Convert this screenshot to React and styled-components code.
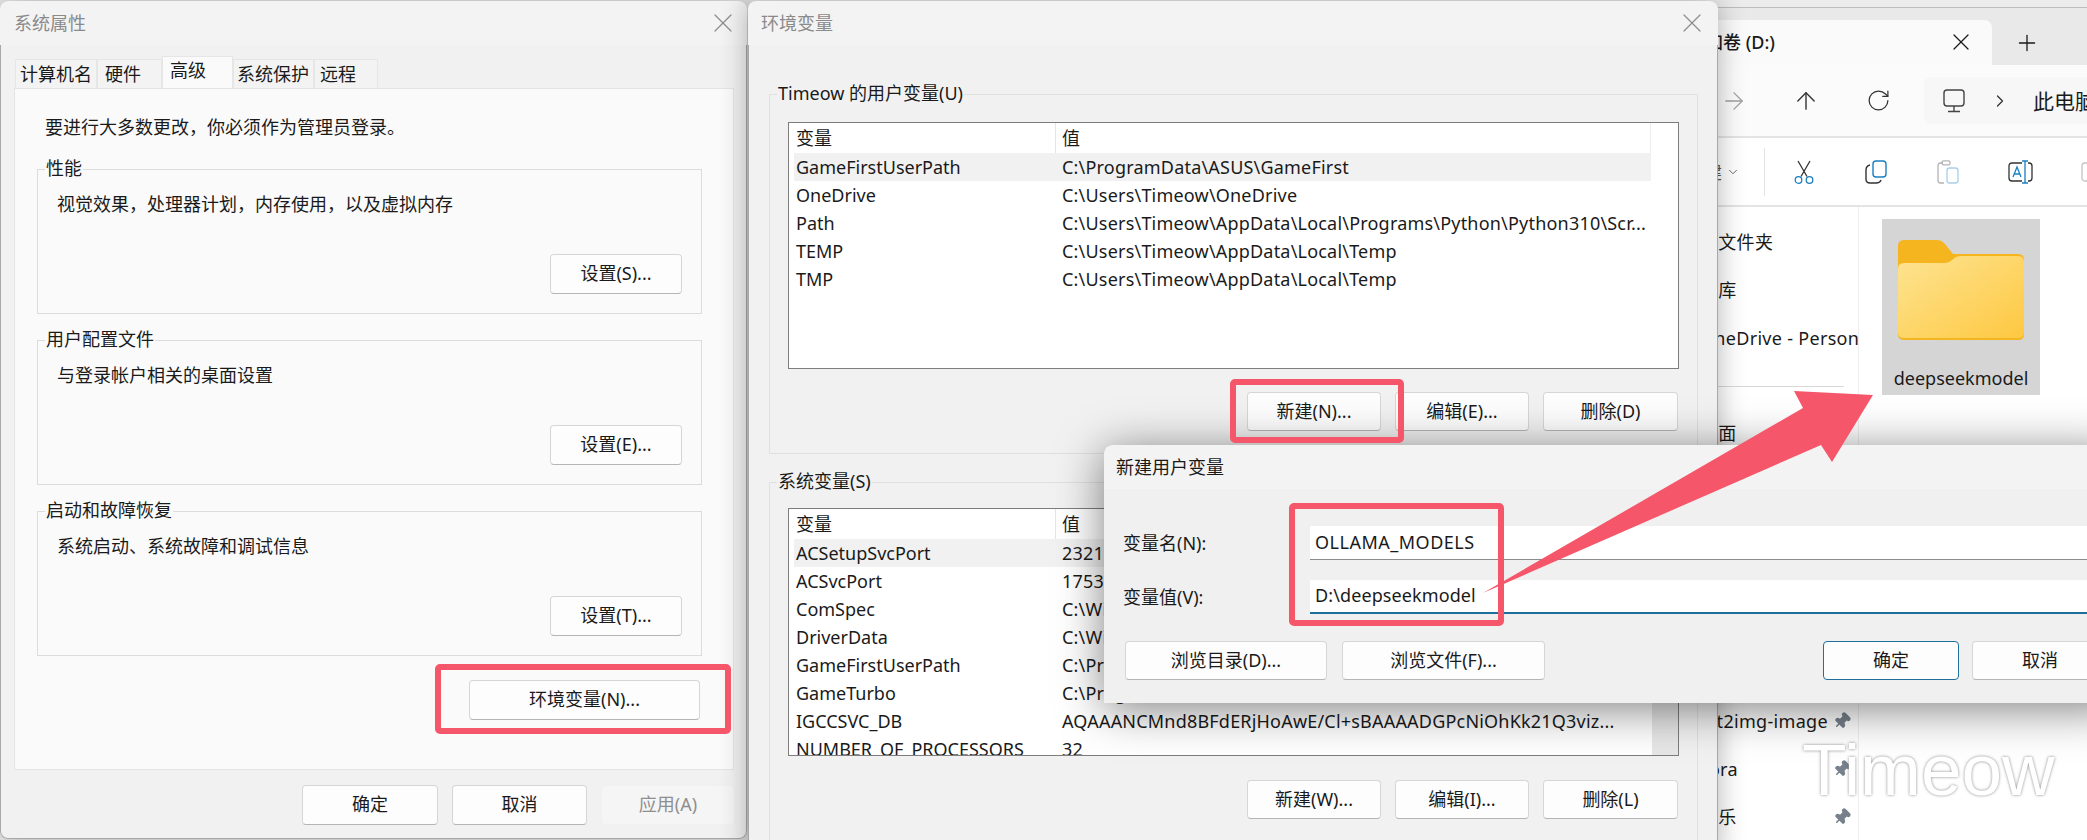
import React from "react";
import styled, { createGlobalStyle } from "styled-components";
import {
  X,
  Plus,
  ArrowUp,
  ArrowRight,
  RotateCw,
  ChevronRight,
  ChevronDown,
  Pin,
} from "lucide-react";

const accent = "#f6566a";

const GlobalStyle = createGlobalStyle`
  * { box-sizing: border-box; }
  html, body { margin: 0; padding: 0; background: #ececec; }
  body {
    font-family: "Noto Sans", "Noto Sans CJK SC", sans-serif;
    font-size: 18px;
    line-height: 24px;
    color: #1a1a1a;
  }
`;

const Desktop = styled.div`
  position: relative;
  width: 2087px;
  height: 840px;
  overflow: hidden;
  background: #ececec;
`;

/* windows sit on the desktop at their own place */
const Win = styled.div`
  position: absolute;
  left: ${(p) => p.$x}px;
  top: ${(p) => p.$y}px;
  width: ${(p) => p.$w}px;
  height: ${(p) => p.$h}px;
  z-index: ${(p) => p.$z};
  display: flex;
  flex-direction: column;
  background: #f1f1f1;
  border-radius: 8px;
  box-shadow: inset 0 0 0 1px #a8a8a8, 0 0 28px rgba(0, 0, 0, 0.3);
`;

const DialogWin = styled(Win)`
  box-shadow: inset 0 2px 0 #a5a5a5, inset 2px 0 0 #b5b5b5, 0 6px 46px rgba(0, 0, 0, 0.5);
`;

const TitleBar = styled.div`
  flex: none;
  height: 44px;
  display: flex;
  align-items: center;
  justify-content: space-between;
  padding: 0 ${(p) => p.$padRight || 0}px 0 ${(p) => p.$pad}px;
  color: ${(p) => p.$color || "#8a8a8a"};
  background: #f3f3f3;
  border-radius: 8px 8px 0 0;
`;

const CloseIcon = styled(X)`
  color: #8c8c8c;
`;

const TabStrip = styled.div`
  height: 32px;
  margin-top: 11px;
  padding-left: 15px;
  display: flex;
  align-items: flex-end;
`;

const PropTab = styled.div`
  width: ${(p) => p.$w}px;
  height: ${(p) => (p.$active ? 32 : 29)}px;
  padding: 0 0 ${(p) => (p.$active ? 6 : 0)}px ${(p) => p.$pad}px;
  display: flex;
  align-items: center;
  background: ${(p) => (p.$active ? "#fafafa" : "#f3f3f3")};
  border: 1px solid #e6e6e6;
  border-bottom: none;
`;

const TabPanel = styled.div`
  height: 682px;
  margin: 0 13px 0 14px;
  padding: 26px 31px 0 22px;
  display: flex;
  flex-direction: column;
  background: #fafafa;
  border: 1px solid #e4e4e4;
`;

const Intro = styled.div`
  padding-left: 8px;
`;

const GroupBox = styled.div`
  position: relative;
  height: 145px;
  margin-top: ${(p) => p.$top}px;
  padding: 22px 19px 19px;
  display: flex;
  flex-direction: column;
  justify-content: space-between;
  align-items: flex-start;
  border: 1px solid #dcdcdc;
`;

const Legend = styled.span`
  position: absolute;
  left: ${(p) => p.$left || 7}px;
  top: -14px;
  padding: 0 1px;
  background: ${(p) => p.$bg};
  white-space: nowrap;
`;

const Button = styled.button`
  flex: none;
  width: ${(p) => p.$w}px;
  height: ${(p) => p.$h || 40}px;
  padding: 0 0 2px;
  font: inherit;
  color: ${(p) => (p.disabled ? "#8f8f8f" : "#1a1a1a")};
  background: ${(p) => (p.disabled ? "#f5f5f5" : "#fdfdfd")};
  border: 1px solid ${(p) => (p.disabled ? "#f0f0f0" : p.$primary ? "#1f6f9c" : "#d6d6d6")};
  border-bottom-color: ${(p) => (p.disabled ? "#f0f0f0" : p.$primary ? "#1f6f9c" : "#b5b5b5")};
  border-radius: 4px;
`;

const GroupButton = styled(Button)`
  align-self: flex-end;
`;

const EnvVarButton = styled(Button)`
  align-self: flex-end;
  margin-top: 24px;
  margin-right: 2px;
`;

const Footer = styled.div`
  margin-top: 15px;
  padding-right: 12px;
  display: flex;
  justify-content: flex-end;
  gap: 14px;
`;

const EnvGroup = styled.div`
  position: relative;
  flex: none;
  margin: ${(p) => p.$mt}px 20px 0 21px;
  padding: ${(p) => p.$pt}px 18px 22px 18px;
  border: 1px solid #e0e0e0;
`;

const ListFrame = styled.div`
  height: ${(p) => p.$h}px;
  display: flex;
  overflow: hidden;
  background: #fff;
  border: 1px solid #7d7d7d;
`;

const ListBody = styled.div`
  width: 857px;
  margin-left: 5px;
`;

const Track = styled.div`
  flex: 1;
  margin-left: 1px;
  background: ${(p) => (p.$on ? "#e7e7e7" : "#fff")};
`;

const ListHead = styled.div`
  height: 30px;
  display: grid;
  grid-template-columns: 261px 1fr;
  align-items: stretch;
  border-right: 1px solid #ececec;
`;

const HeadCell = styled.div`
  padding-left: ${(p) => p.$pad}px;
  display: flex;
  align-items: center;
  border-left: ${(p) => (p.$divider ? "1px solid #e5e5e5" : "none")};
`;

const ListRow = styled.div`
  height: 28px;
  display: grid;
  grid-template-columns: 261px 1fr;
  align-items: center;
  background: ${(p) => (p.$selected ? "#f1f1f1" : "transparent")};
  white-space: nowrap;
`;

const NameCell = styled.div`
  padding-left: 2px;
  overflow: hidden;
`;

const ValueCell = styled.div`
  padding-left: 7px;
  overflow: hidden;
  letter-spacing: 0.2px;
`;

const ButtonRow = styled.div`
  margin-top: ${(p) => p.$mt}px;
  padding-right: 1px;
  display: flex;
  justify-content: flex-end;
  gap: 14px;
`;

const DialogBody = styled.div`
  flex: 1;
  padding: 37px 13px 0 19px;
  display: flex;
  flex-direction: column;
  gap: 20px;
  background: #f0f0f0;
`;

const FormRow = styled.div`
  display: flex;
  align-items: center;
`;

const FormLabel = styled.label`
  flex: none;
  width: 187px;
`;

const TextInput = styled.div`
  flex: 1;
  height: 34px;
  padding: 0 0 2px 5px;
  display: flex;
  align-items: center;
  letter-spacing: ${(p) => p.$track || 0}px;
  background: #fff;
  border-bottom: ${(p) => (p.$focus ? "2px solid #1f6f9c" : "1px solid #8c8c8c")};
`;

const DialogActions = styled.div`
  margin-top: 7px;
  padding-left: 2px;
  display: flex;
  gap: 15px;
`;

const ConfirmGroup = styled.div`
  margin-left: auto;
  display: flex;
  gap: 13px;
`;

const Highlight = styled.div`
  position: absolute;
  left: ${(p) => p.$x}px;
  top: ${(p) => p.$y}px;
  width: ${(p) => p.$w}px;
  height: ${(p) => p.$h}px;
  z-index: 6;
  border: 6px solid ${accent};
  border-radius: 5px;
  pointer-events: none;
`;

const ArrowSvg = styled.svg`
  position: absolute;
  left: 0;
  top: 0;
  z-index: 7;
  pointer-events: none;
`;

const Watermark = styled.div`
  position: absolute;
  left: 1802px;
  top: 728px;
  z-index: 5;
  font-family: "Liberation Sans", Arial, sans-serif;
  font-size: 73px;
  line-height: 84px;
  color: #fff;
  text-shadow: 0 0 3px rgba(90, 90, 90, 0.75);
`;

/* file explorer behind the dialogs */
const Explorer = styled.div`
  position: absolute;
  left: 1640px;
  top: 7px;
  width: 460px;
  height: 833px;
  z-index: 1;
  display: flex;
  flex-direction: column;
  background: #fff;
  border-top: 1px solid #bdbdbd;
`;

const ExplorerTabs = styled.div`
  flex: none;
  height: 57px;
  padding-top: 12px;
  display: flex;
  background: #e9e9e9;
`;

const ExplorerTab = styled.div`
  width: 352px;
  padding: 0 17px 2px 47px;
  display: flex;
  align-items: center;
  justify-content: space-between;
  font-weight: 500;
  background: #fafafa;
  border-radius: 8px 8px 0 0;
`;

const NewTab = styled.div`
  width: 70px;
  display: flex;
  align-items: center;
  justify-content: center;
`;

const NavBar = styled.div`
  flex: none;
  height: 73px;
  padding-left: 58px;
  display: flex;
  align-items: center;
  background: #fbfbfb;
  border-bottom: 2px solid #e4e4e4;
`;

const IconSlot = styled.div`
  flex: none;
  width: 72px;
  height: 40px;
  display: flex;
  align-items: center;
  justify-content: center;
  color: ${(p) => p.$color || "#333"};
`;

const AddressBar = styled.div`
  flex: none;
  width: 200px;
  height: 47px;
  margin-left: 10px;
  padding-left: 19px;
  display: flex;
  align-items: center;
  font-size: 21px;
  background: #f7f7f7;
  border-radius: 6px;
  white-space: nowrap;
`;

const Crumb = styled.div`
  margin: 0 23px 0 25px;
  display: flex;
  color: #333;
`;

const CommandBar = styled.div`
  flex: none;
  height: 69px;
  padding-left: 46px;
  display: flex;
  align-items: center;
  background: #fff;
  border-bottom: 2px solid #e4e4e4;
`;

const NewLabel = styled.div`
  flex: none;
  display: flex;
  align-items: center;
  gap: 4px;
  white-space: nowrap;
  color: #555;
`;

const Separator = styled.div`
  flex: none;
  width: 1px;
  height: 48px;
  margin-left: 24px;
  margin-right: 3px;
  background: #e2e2e2;
`;

const ExplorerMain = styled.div`
  flex: 1;
  display: flex;
`;

const Sidebar = styled.div`
  flex: none;
  width: 219px;
  padding-top: 11px;
  border-right: 1px solid #eeeeee;
`;

const SideRow = styled.div`
  height: 48px;
  padding-left: 60px;
  padding-right: 7px;
  display: flex;
  align-items: center;
  justify-content: space-between;
  letter-spacing: 0.3px;
  white-space: nowrap;
  overflow: hidden;
`;

const SideRule = styled.div`
  height: 1px;
  margin: 24px 14px 22px 0;
  background: #d8d8d8;
`;

const SideGap = styled.div`
  height: ${(p) => p.$h}px;
`;

const FileArea = styled.div`
  flex: 1;
  padding: 12px 0 0 23px;
`;

const FileTile = styled.div`
  width: 158px;
  height: 176px;
  padding-top: 21px;
  display: flex;
  flex-direction: column;
  align-items: center;
  background: #d5d5d5;
`;

const FileName = styled.div`
  margin-top: 26px;
`;

const PinIcon = styled(Pin)`
  flex: none;
  color: #77818c;
  fill: #77818c;
  transform: rotate(45deg);
`;

const FolderIcon = () => (
  <svg width="126" height="100" viewBox="0 0 126 100">
    <defs>
      <linearGradient id="folderFront" x1="0" y1="0" x2="1" y2="1">
        <stop offset="0" stopColor="#fde492" />
        <stop offset="1" stopColor="#fec841" />
      </linearGradient>
    </defs>
    <path d="M0 6Q0 0 6 0H38Q44 0 47 4L55 14H120Q126 14 126 20V94Q126 100 120 100H6Q0 100 0 94Z" fill="#f4b51f" />
    <path d="M0 29Q0 23 6 23H46Q51 23 54 20L58 17Q60 16 64 16H120Q126 16 126 22V92Q126 98 120 98H6Q0 98 0 92Z" fill="url(#folderFront)" />
  </svg>
);

const MonitorIcon = () => (
  <svg width="22" height="24" viewBox="0 0 22 24" fill="none" stroke="#444" strokeWidth="1.4">
    <rect x="1" y="1" width="20" height="16" rx="3" />
    <path d="M11 17v5M5 22.5h12" />
  </svg>
);

const CutIcon = () => (
  <svg width="22" height="24" viewBox="0 0 22 24" fill="none" strokeWidth="1.3">
    <path d="M5 1L14 16.5M17 1L8 16.5" stroke="#333" />
    <circle cx="5.5" cy="20" r="3.3" stroke="#1a7fc1" />
    <circle cx="16.5" cy="20" r="3.3" stroke="#1a7fc1" />
  </svg>
);

const CopyIcon = () => (
  <svg width="22" height="24" viewBox="0 0 22 24" fill="none" strokeWidth="1.4">
    <rect x="8" y="1" width="13" height="16" rx="3" stroke="#1a7fc1" />
    <path d="M5 5Q1 6 1 10V19Q1 23 5 23H11Q15 23 16 20" stroke="#333" />
  </svg>
);

const PasteIcon = () => (
  <svg width="22" height="24" viewBox="0 0 22 24" fill="none" strokeWidth="1.3">
    <path d="M6 3H3.5Q1 3 1 6V20Q1 23 3.5 23H7" stroke="#b4b4b4" />
    <rect x="5" y="0.8" width="8" height="4" rx="1.5" stroke="#b4b4b4" />
    <rect x="10" y="8" width="11" height="15" rx="2.5" stroke="#a8cfe8" />
  </svg>
);

const RenameIcon = () => (
  <svg width="25" height="24" viewBox="0 0 25 24" fill="none" strokeWidth="1.3">
    <path d="M14 3H4Q1 3 1 6V18Q1 21 4 21H14M20 3H21Q24 3 24 6V18Q24 21 21 21H20" stroke="#333" />
    <path d="M17 1V23M14 1H20M14 23H20" stroke="#1a7fc1" />
    <path d="M5 17L9 7L13 17M6.5 14H11.5" stroke="#1a7fc1" />
  </svg>
);

const ShareIcon = () => (
  <svg width="22" height="24" viewBox="0 0 22 24" fill="none" strokeWidth="1.3">
    <rect x="1" y="3" width="18" height="18" rx="3" stroke="#c4c4c4" />
  </svg>
);

const userVars = [
  ["GameFirstUserPath", "C:\\ProgramData\\ASUS\\GameFirst"],
  ["OneDrive", "C:\\Users\\Timeow\\OneDrive"],
  ["Path", "C:\\Users\\Timeow\\AppData\\Local\\Programs\\Python\\Python310\\Scr..."],
  ["TEMP", "C:\\Users\\Timeow\\AppData\\Local\\Temp"],
  ["TMP", "C:\\Users\\Timeow\\AppData\\Local\\Temp"],
];

const systemVars = [
  ["ACSetupSvcPort", "23210"],
  ["ACSvcPort", "17532"],
  ["ComSpec", "C:\\Windows\\system32\\cmd.exe"],
  ["DriverData", "C:\\Windows\\System32\\Drivers\\DriverData"],
  ["GameFirstUserPath", "C:\\ProgramData\\ASUS\\GameFirst"],
  ["GameTurbo", "C:\\Program Files (x86)\\ASUS\\GameTurbo"],
  ["IGCCSVC_DB", "AQAAANCMnd8BFdERjHoAwE/Cl+sBAAAADGPcNiOhKk21Q3viz..."],
  ["NUMBER_OF_PROCESSORS", "32"],
];

const VarList = ({ rows, height, scroll }) => (
  <ListFrame $h={height}>
    <ListBody>
      <ListHead>
        <HeadCell $pad={2}>变量</HeadCell>
        <HeadCell $pad={6} $divider>值</HeadCell>
      </ListHead>
      {rows.map(([name, value], i) => (
        <ListRow key={name} $selected={i === 0}>
          <NameCell>{name}</NameCell>
          <ValueCell>{value}</ValueCell>
        </ListRow>
      ))}
    </ListBody>
    <Track $on={scroll} />
  </ListFrame>
);

const App = () => (
  <Desktop>
    <GlobalStyle />

    <Explorer>
      <ExplorerTabs>
        <ExplorerTab>
          <span>新加卷 (D:)</span>
          <X size={28} strokeWidth={1.1} />
        </ExplorerTab>
        <NewTab>
          <Plus size={26} strokeWidth={1.2} />
        </NewTab>
      </ExplorerTabs>
      <NavBar>
        <IconSlot $color="#a0a0a0"><ArrowRight size={28} strokeWidth={1.1} /></IconSlot>
        <IconSlot><ArrowUp size={28} strokeWidth={1.2} /></IconSlot>
        <IconSlot><RotateCw size={25} strokeWidth={1.2} /></IconSlot>
        <AddressBar>
          <MonitorIcon />
          <Crumb><ChevronRight size={20} strokeWidth={1.5} /></Crumb>
          <span>此电脑</span>
        </AddressBar>
      </NavBar>
      <CommandBar>
        <NewLabel>
          新建
          <ChevronDown size={14} strokeWidth={1.5} />
        </NewLabel>
        <Separator />
        <IconSlot><CutIcon /></IconSlot>
        <IconSlot><CopyIcon /></IconSlot>
        <IconSlot><PasteIcon /></IconSlot>
        <IconSlot><RenameIcon /></IconSlot>
        <IconSlot><ShareIcon /></IconSlot>
      </CommandBar>
      <ExplorerMain>
        <Sidebar>
          <SideRow>主文件夹</SideRow>
          <SideRow>图库</SideRow>
          <SideRow>OneDrive - Personal</SideRow>
          <SideRule />
          <SideRow>桌面</SideRow>
          <SideGap $h={240} />
          <SideRow>
            txt2img-image
            <PinIcon size={18} />
          </SideRow>
          <SideRow>
            sora
            <PinIcon size={18} />
          </SideRow>
          <SideRow>
            音乐
            <PinIcon size={18} />
          </SideRow>
        </Sidebar>
        <FileArea>
          <FileTile>
            <FolderIcon />
            <FileName>deepseekmodel</FileName>
          </FileTile>
        </FileArea>
      </ExplorerMain>
    </Explorer>

    <Win $x={0} $y={1} $w={747} $h={838} $z={2}>
      <TitleBar $pad={14} $padRight={8}>
        系统属性
        <CloseIcon size={32} strokeWidth={0.9} />
      </TitleBar>
      <TabStrip>
        <PropTab $w={82} $pad={4}>计算机名</PropTab>
        <PropTab $w={65} $pad={7}>硬件</PropTab>
        <PropTab $w={71} $active $pad={7}>高级</PropTab>
        <PropTab $w={81} $pad={3}>系统保护</PropTab>
        <PropTab $w={64} $pad={5}>远程</PropTab>
      </TabStrip>
      <TabPanel>
        <Intro>要进行大多数更改，你必须作为管理员登录。</Intro>
        <GroupBox $top={30}>
          <Legend $bg="#fafafa">性能</Legend>
          视觉效果，处理器计划，内存使用，以及虚拟内存
          <GroupButton $w={132}>设置(S)...</GroupButton>
        </GroupBox>
        <GroupBox $top={26}>
          <Legend $bg="#fafafa">用户配置文件</Legend>
          与登录帐户相关的桌面设置
          <GroupButton $w={132}>设置(E)...</GroupButton>
        </GroupBox>
        <GroupBox $top={26}>
          <Legend $bg="#fafafa">启动和故障恢复</Legend>
          系统启动、系统故障和调试信息
          <GroupButton $w={132}>设置(T)...</GroupButton>
        </GroupBox>
        <EnvVarButton $w={231}>环境变量(N)...</EnvVarButton>
      </TabPanel>
      <Footer>
        <Button $w={136}>确定</Button>
        <Button $w={135}>取消</Button>
        <Button $w={134} disabled>应用(A)</Button>
      </Footer>
    </Win>

    <Win $x={748} $y={1} $w={970} $h={860} $z={3}>
      <TitleBar $pad={13} $padRight={10}>
        环境变量
        <CloseIcon size={32} strokeWidth={0.9} />
      </TitleBar>
      <EnvGroup $mt={49} $pt={27}>
        <Legend $bg="#f1f1f1" $left={7}>Timeow 的用户变量(U)</Legend>
        <VarList rows={userVars} height={247} />
        <ButtonRow $mt={23}>
          <Button $w={134} $h={39}>新建(N)...</Button>
          <Button $w={134} $h={39}>编辑(E)...</Button>
          <Button $w={135} $h={39}>删除(D)</Button>
        </ButtonRow>
      </EnvGroup>
      <EnvGroup $mt={28} $pt={25}>
        <Legend $bg="#f1f1f1" $left={7}>系统变量(S)</Legend>
        <VarList rows={systemVars} height={248} scroll />
        <ButtonRow $mt={24}>
          <Button $w={134} $h={39}>新建(W)...</Button>
          <Button $w={134} $h={39}>编辑(I)...</Button>
          <Button $w={135} $h={39}>删除(L)</Button>
        </ButtonRow>
      </EnvGroup>
    </Win>

    <DialogWin $x={1104} $y={445} $w={1017} $h={258} $z={4}>
      <TitleBar $pad={12} $color="#1a1a1a">新建用户变量</TitleBar>
      <DialogBody>
        <FormRow>
          <FormLabel>变量名(N):</FormLabel>
          <TextInput $track={0.5}>OLLAMA_MODELS</TextInput>
        </FormRow>
        <FormRow>
          <FormLabel>变量值(V):</FormLabel>
          <TextInput $focus $track={0.1}>D:\deepseekmodel</TextInput>
        </FormRow>
        <DialogActions>
          <Button $w={202} $h={39}>浏览目录(D)...</Button>
          <Button $w={203} $h={39}>浏览文件(F)...</Button>
          <ConfirmGroup>
            <Button $w={136} $h={39} $primary>确定</Button>
            <Button $w={136} $h={39}>取消</Button>
          </ConfirmGroup>
        </DialogActions>
      </DialogBody>
    </DialogWin>

    <Highlight $x={435} $y={664} $w={296} $h={70} />
    <Highlight $x={1230} $y={379} $w={174} $h={64} />
    <Highlight $x={1289} $y={503} $w={215} $h={123} />

    <ArrowSvg width="2087" height="840" viewBox="0 0 2087 840">
      <polygon points="1483,593 1803,408 1794,391 1873,395 1832,462 1821,445" fill={accent} />
    </ArrowSvg>

    <Watermark>Timeow</Watermark>
  </Desktop>
);

export default App;
